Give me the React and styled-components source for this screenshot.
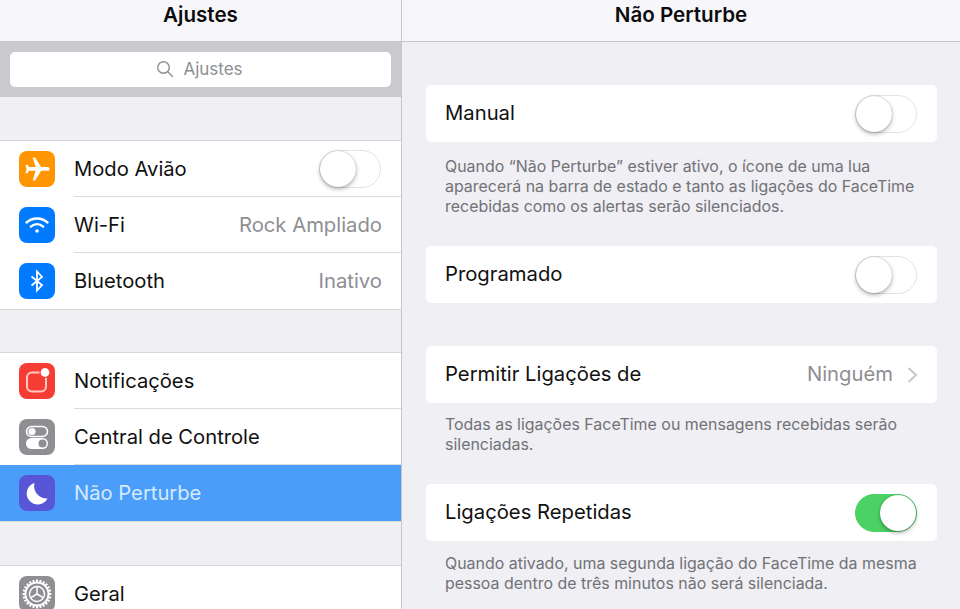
import React from "react";
import styled, { createGlobalStyle } from "styled-components";

const Global = createGlobalStyle`
  html, body { margin: 0; padding: 0; background: #efeff4; }
  body { font-family: Inter, "Noto Sans", "Liberation Sans", sans-serif; overflow: hidden; }
`;
const Page = styled.div`display: flex; width: 960px; height: 609px; overflow: hidden; background: #efeff4;`;
const Sidebar = styled.aside`width: 401px; flex: none; border-right: 1px solid #c6c6ca; overflow: hidden; display: flex; flex-direction: column;`;
const Detail = styled.main`flex: 1; min-width: 0; overflow: hidden; display: flex; flex-direction: column;`;
const Header = styled.header`
  height: 42px; flex: none; box-sizing: border-box; border-bottom: 1px solid #c4c4c8; background: #f7f7fa;
  display: flex; justify-content: center; align-items: flex-start; padding-top: 3px;
  font-size: 20.6px; line-height: 24px; font-weight: 600; color: #0c0c0e;
`;
const SearchZone = styled.div`height: 55px; flex: none; box-sizing: border-box; padding: 10px 10px; background: #c9c9ce;`;
const SearchBox = styled.div`
  height: 35px; box-sizing: border-box; padding: 0 2px 1px 0; border-radius: 5px; background: #fff; display: flex; align-items: center; justify-content: center; gap: 9px;
  color: #8e8e93; font-size: 17px;
`;
const Group = styled.section`
  margin-top: ${p => p.$top}px; background: #fff; flex: none;
  border-top: 1px solid #d9d9dd; border-bottom: 1px solid #d9d9dd;
`;
const Row = styled.div`
  height: 56px; box-sizing: border-box; display: flex; align-items: center; padding: 0 19px;
  background: ${p => (p.$selected ? "#4a9df8" : "#fff")};
  color: ${p => (p.$selected ? "#d6eaff" : "#111")};
  font-size: 20.2px; position: relative;
  &:not(:last-child)::after {
    content: ""; position: absolute; left: 74px; right: 0; bottom: 0; height: 1px; background: #dcdce0;
  }
`;
const Tile = styled.span`
  width: 36px; height: 36px; border-radius: 8px; flex: none; background: ${p => p.$bg};
  display: flex; align-items: center; justify-content: center; margin-right: 19px;
`;
const Label = styled.span`flex: 1; white-space: nowrap; padding-bottom: 2px;`;
const Value = styled.span`color: #8e8e93; font-size: 20.25px; white-space: nowrap; padding-bottom: 2px;`;
const SwitchTrack = styled.span`
  width: 62px; height: 38px; margin-right: 1px; box-sizing: border-box; border-radius: 19px; flex: none; position: relative;
  border: 1px solid ${p => (p.$on ? "#4cd264" : "#e3e3e6")};
  background: ${p => (p.$on ? "#4cd264" : "#fff")};
`;
const Knob = styled.span`
  position: absolute; top: 0; ${p => (p.$on ? "right: 0;" : "left: 0;")}
  width: 36px; height: 36px; border-radius: 50%; background: #fff;
  box-shadow: 0 2px 4px rgba(0,0,0,.3), 0 0 1px rgba(0,0,0,.35);
`;
const Card = styled.div`
  margin: ${p => p.$top}px 23px 0 24px; height: 57px; flex: none; box-sizing: border-box; border-radius: 5px; background: #fff;
  display: flex; align-items: center; padding: 0 19px 0 19px;
  font-size: 20.25px; color: #111;
`;
const Note = styled.p`
  margin: ${p => p.$top}px 23px 0 43px; font-size: 15.95px; line-height: 20px; color: #727277; flex: none; white-space: nowrap;
`;
const Chevron = styled.svg`width: 11px; height: 18px; margin-left: 14px; flex: none;`;

const Switch = ({ on }) => <SwitchTrack $on={on}><Knob $on={on} /></SwitchTrack>;

const Plane = () => (
  <svg width="29" height="29" viewBox="0 0 24 24"><path fill="#fff" transform="rotate(90 12 12)" d="M21 16v-2l-8-5V3.5c0-.83-.67-1.5-1.5-1.5S10 2.67 10 3.5V9l-8 5v2l8-2.5V19l-2 1.5V22l3.5-1 3.5 1v-1.5L13 19v-5.5l8 2.5z" /></svg>
);
const Wifi = () => (
  <svg width="28" height="28" viewBox="0 0 28 28" fill="none" stroke="#fff" strokeWidth="2.4" strokeLinecap="round">
    <path d="M3.5 11.5C9.5 6.2 18.5 6.2 24.5 11.5" />
    <path d="M7.8 15.6C11.5 12.4 16.5 12.4 20.2 15.6" />
    <circle cx="14" cy="20" r="1.8" fill="#fff" stroke="none" />
  </svg>
);
const Bt = () => (
  <svg width="28" height="28" viewBox="0 0 28 28" fill="none" stroke="#fff" strokeWidth="1.8" strokeLinejoin="miter">
    <path d="M8.5 9.5L19 18L14 23.5V4.5L19 10L8.5 18.5" />
  </svg>
);
const Bell = () => (
  <svg width="36" height="36" viewBox="0 0 36 36" fill="none">
    <rect x="8" y="9.5" width="19" height="19" rx="5" stroke="#ffc9c4" strokeWidth="2" />
    <circle cx="26" cy="9.5" r="5.6" fill="#f63d34" />
    <circle cx="26" cy="9.5" r="4.4" fill="#fff" />
  </svg>
);
const Control = () => (
  <svg width="36" height="36" viewBox="0 0 36 36">
    <rect x="7.5" y="7.5" width="21" height="10" rx="5" fill="none" stroke="#fff" strokeWidth="1.6" />
    <circle cx="13" cy="12.5" r="3.6" fill="#fff" />
    <rect x="7" y="19" width="22" height="11" rx="5.5" fill="#fff" />
    <circle cx="23.5" cy="24.5" r="4" fill="#8e8e93" />
  </svg>
);
const Moon = () => (
  <svg width="36" height="36" viewBox="0 0 36 36">
    <path fill="#fff" d="M15.5 8A11 11 0 1 0 28.5 23.5A12.5 12.5 0 0 1 15.5 8Z" />
  </svg>
);
const Gear = () => {
  const teeth = Array.from({ length: 24 }, (_, i) => i * 15);
  return (
    <svg width="36" height="36" viewBox="0 0 36 36" fill="none" stroke="#fff">
      {teeth.map(a => (
        <line key={a} x1="18" y1="3.5" x2="18" y2="7" strokeWidth="2" transform={`rotate(${a} 18 18)`} />
      ))}
      <circle cx="18" cy="18" r="11.5" strokeWidth="1.8" />
      <circle cx="18" cy="18" r="7.5" strokeWidth="1.4" />
      <path d="M18 18V10.5M18 18L11.5 21.8M18 18L24.5 21.8" strokeWidth="1.5" />
    </svg>
  );
};

export default function App() {
  return (
    <Page>
      <Global />
      <Sidebar>
        <Header>Ajustes</Header>
        <SearchZone>
          <SearchBox>
            <svg width="18" height="18" viewBox="0 0 18 18" fill="none" stroke="#8e8e93" strokeWidth="1.4">
              <circle cx="7.5" cy="7.5" r="5.8" /><path d="M11.8 11.8L16.5 16.5" strokeLinecap="round" />
            </svg>
            Ajustes
          </SearchBox>
        </SearchZone>
        <Group $top={43}>
          <Row><Tile $bg="#ff9500"><Plane /></Tile><Label>Modo Avião</Label><Switch /></Row>
          <Row><Tile $bg="#007aff"><Wifi /></Tile><Label>Wi-Fi</Label><Value>Rock Ampliado</Value></Row>
          <Row><Tile $bg="#007aff"><Bt /></Tile><Label>Bluetooth</Label><Value>Inativo</Value></Row>
        </Group>
        <Group $top={42}>
          <Row><Tile $bg="#f63d34"><Bell /></Tile><Label>Notificações</Label></Row>
          <Row><Tile $bg="#8e8e93"><Control /></Tile><Label>Central de Controle</Label></Row>
          <Row $selected><Tile $bg="#5856d6"><Moon /></Tile><Label>Não Perturbe</Label></Row>
        </Group>
        <Group $top={43}>
          <Row><Tile $bg="#8e8e93"><Gear /></Tile><Label>Geral</Label></Row>
        </Group>
      </Sidebar>
      <Detail>
        <Header>Não Perturbe</Header>
        <Card $top={43}><Label>Manual</Label><Switch /></Card>
        <Note $top={15}>Quando “Não Perturbe” estiver ativo, o ícone de uma lua<br />aparecerá na barra de estado e tanto as ligações do FaceTime<br />recebidas como os alertas serão silenciados.</Note>
        <Card $top={29}><Label>Programado</Label><Switch /></Card>
        <Card $top={43}>
          <Label>Permitir Ligações de</Label><Value>Ninguém</Value>
          <Chevron viewBox="0 0 11 18" fill="none" stroke="#c7c7cc" strokeWidth="2"><path d="M1.5 2L9 9L1.5 16" /></Chevron>
        </Card>
        <Note $top={12}>Todas as ligações FaceTime ou mensagens recebidas serão<br />silenciadas.</Note>
        <Card $top={29}><Label>Ligações Repetidas</Label><Switch on /></Card>
        <Note $top={13}>Quando ativado, uma segunda ligação do FaceTime da mesma<br />pessoa dentro de três minutos não será silenciada.</Note>
      </Detail>
    </Page>
  );
}
